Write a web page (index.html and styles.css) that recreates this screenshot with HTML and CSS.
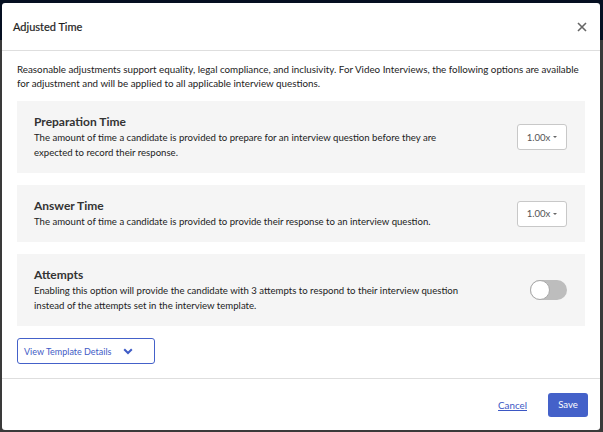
FILE: index.html
```html
<!DOCTYPE html>
<html>
<head>
<meta charset="utf-8">
<link rel="stylesheet" href="styles.css">
</head>
<body>
<div class="topnav">
  <span class="nav-item">Analytics</span>
  <span class="nav-item">Manage ▾</span>
  <span class="nav-sep"></span>
  <span class="nav-item">Develop</span>
</div>
<div class="backdrop"></div>
<div class="modal">
  <div class="modal-header">
    <h1 class="modal-title">Adjusted Time</h1>
    <svg class="close" width="10" height="10" viewBox="0 0 10 10"><path d="M1 1 L9 9 M9 1 L1 9" stroke="#666" stroke-width="1.6" fill="none"/></svg>
  </div>
  <div class="modal-body">
    <p class="intro">Reasonable adjustments support equality, legal compliance, and inclusivity. For Video Interviews, the following options are available for adjustment and will be applied to all applicable interview questions.</p>
    <div class="panel">
      <div class="panel-text">
        <div class="panel-title">Preparation Time</div>
        <div class="panel-desc">The amount of time a candidate is provided to prepare for an interview question before they are<br>expected to record their response.</div>
      </div>
      <div class="select">1.00x <span class="caret"></span></div>
    </div>
    <div class="panel">
      <div class="panel-text">
        <div class="panel-title">Answer Time</div>
        <div class="panel-desc">The amount of time a candidate is provided to provide their response to an interview question.</div>
      </div>
      <div class="select">1.00x <span class="caret"></span></div>
    </div>
    <div class="panel">
      <div class="panel-text">
        <div class="panel-title">Attempts</div>
        <div class="panel-desc">Enabling this option will provide the candidate with 3 attempts to respond to their interview question<br>instead of the attempts set in the interview template.</div>
      </div>
      <div class="toggle"><span class="knob"></span></div>
    </div>
    <button class="details-btn">View Template Details
      <svg width="10" height="7" viewBox="0 0 10 7"><path d="M1.2 1.2 L5 5 L8.8 1.2" stroke="#3f5cc6" stroke-width="2" fill="none"/></svg>
    </button>
  </div>
  <div class="modal-footer">
    <a class="cancel" href="#">Cancel</a>
    <button class="save">Save</button>
  </div>
</div>
</body>
</html>
```
FILE: styles.css
```css
* { box-sizing: border-box; }
html, body { margin: 0; padding: 0; }
body {
  width: 603px;
  height: 432px;
  overflow: hidden;
  background: #6a6a6a;
  font-family: Lato, "Liberation Sans", sans-serif;
  position: relative;
}
.topnav {
  height: 40px;
  background: #0a1c3c;
  display: flex;
  align-items: center;
  gap: 28px;
  padding-left: 80px;
  color: #cfd6e3;
  font-size: 13px;
}
.nav-sep { width: 1px; height: 14px; background: #8892a6; }
.backdrop {
  position: absolute;
  inset: 0;
  background: rgba(0, 0, 0, 0.45);
}
.modal {
  position: absolute;
  left: 2px;
  top: 3px;
  width: 598px;
  height: 427px;
  background: #fff;
  border-radius: 3px;
  display: flex;
  flex-direction: column;
}
.modal-header {
  height: 48px;
  display: flex;
  align-items: center;
  justify-content: space-between;
  padding: 0 13px 0 11px;
  border-bottom: 1px solid #dedede;
}
.modal-title {
  margin: 0;
  font-size: 11px;
  font-weight: 400;
  line-height: 16px;
  color: #1e1e1e;
  -webkit-text-stroke: 0.2px #1e1e1e;
}
.close { display: block; }
.modal-body {
  padding: 11px 15px 14px;
  border-bottom: 1px solid #dedede;
}
.intro {
  margin: 0 0 11px;
  font-size: 9.8px;
  line-height: 14px;
  color: #222;
}
.panel {
  background: #f5f5f5;
  padding: 13px 18px 13px 17px;
  display: flex;
  align-items: center;
  justify-content: space-between;
  margin-bottom: 12px;
}
.panel-title {
  font-size: 12px;
  font-weight: 700;
  line-height: 16px;
  color: #333;
}
.panel-desc {
  font-size: 9.6px;
  line-height: 15px;
  color: #222;
}
.select {
  width: 50px;
  height: 26px;
  border: 1px solid #c8c8c8;
  border-radius: 3px;
  background: #fff;
  font-size: 9.6px;
  color: #555;
  display: flex;
  align-items: center;
  justify-content: center;
  gap: 3px;
}
.caret {
  width: 0;
  height: 0;
  border-left: 2.5px solid transparent;
  border-right: 2.5px solid transparent;
  border-top: 2.5px solid #666;
}
.toggle {
  width: 37px;
  height: 20px;
  border-radius: 10px;
  background: #bdbdbd;
  position: relative;
}
.knob {
  position: absolute;
  left: 0;
  top: 0;
  width: 20px;
  height: 20px;
  border-radius: 50%;
  background: #fff;
  border: 1px solid #a9a9a9;
}
.details-btn {
  width: 138px;
  height: 26px;
  border: 1px solid #4461c9;
  border-radius: 3px;
  background: #fff;
  color: #3f5cc6;
  font-family: inherit;
  font-size: 9px;
  display: flex;
  align-items: center;
  gap: 12px;
  padding: 0 0 0 6px;
}
.modal-footer {
  flex: 1;
  display: flex;
  align-items: center;
  justify-content: flex-end;
  padding-right: 12px;
  gap: 21px;
}
.cancel {
  font-size: 9.8px;
  color: #3b57c4;
  text-decoration: underline;
}
.save {
  width: 40px;
  height: 24px;
  border: none;
  border-radius: 3px;
  background: #4461c9;
  color: #fff;
  font-family: inherit;
  font-size: 9.6px;
  padding: 0;
}
```
